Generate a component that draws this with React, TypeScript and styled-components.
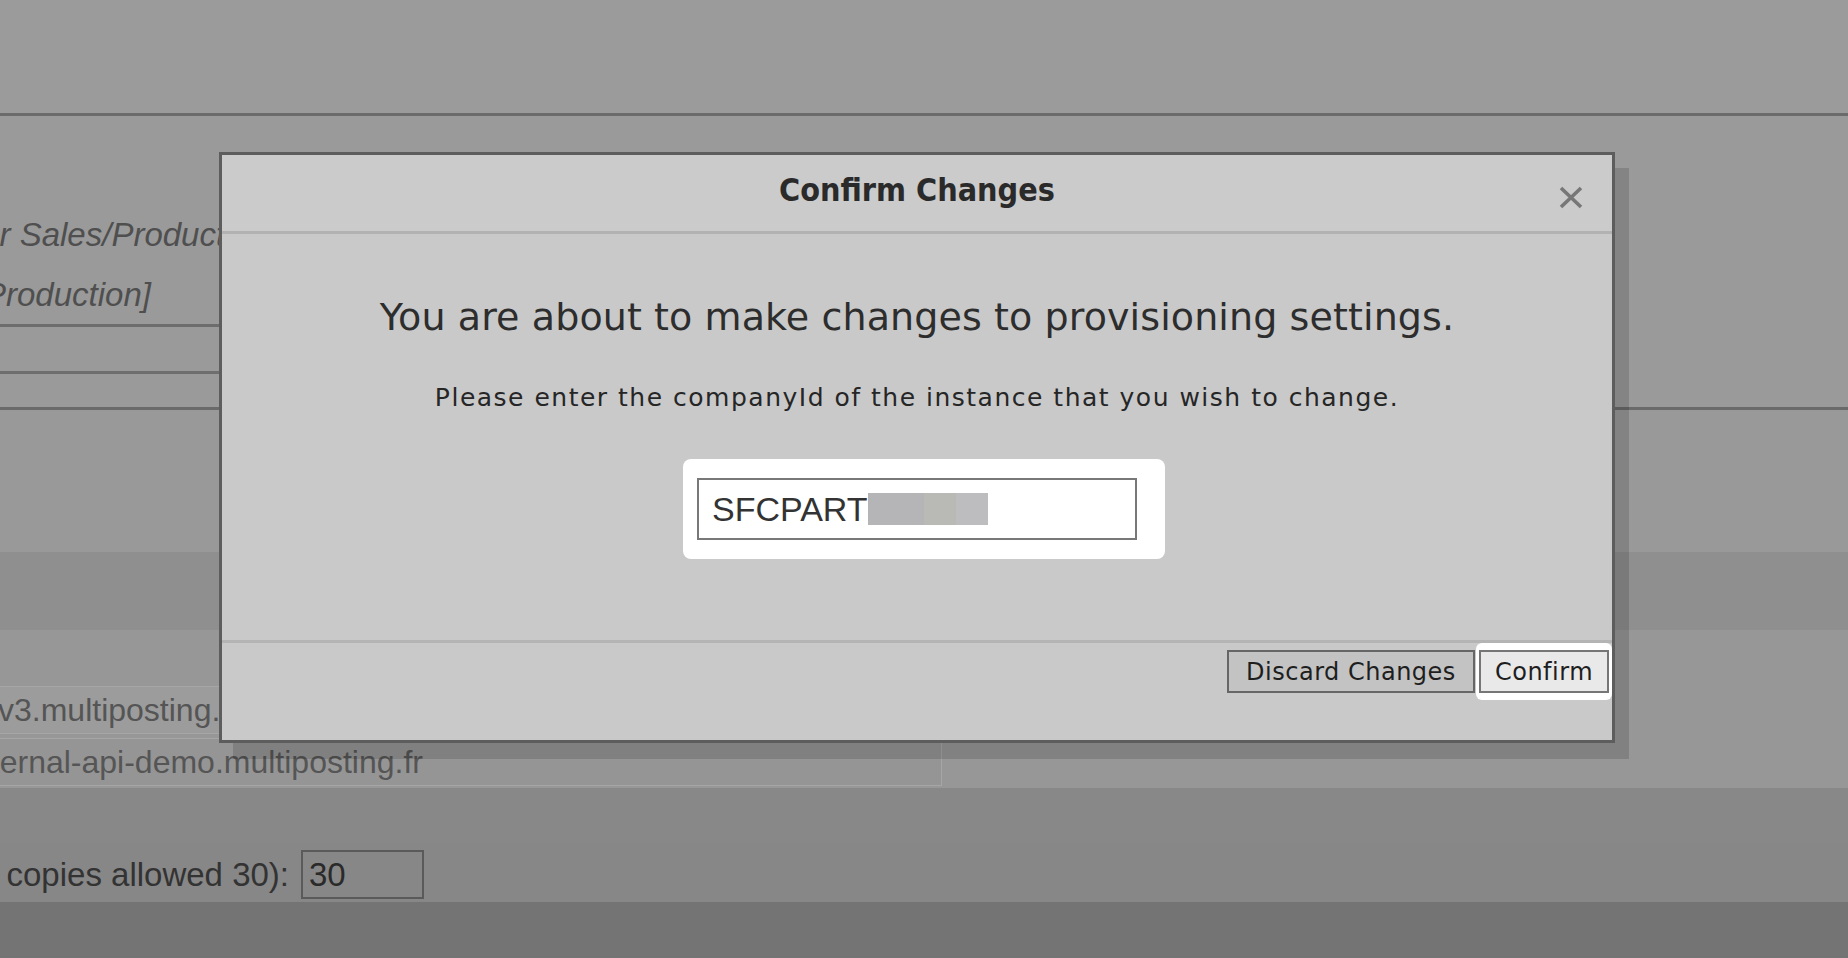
import React from "react";
import styled, { createGlobalStyle } from "styled-components";

const GlobalStyle = createGlobalStyle`
  html, body {
    margin: 0;
    padding: 0;
    height: 100%;
    overflow: hidden;
    background: #747474;
  }
  #root { height: 100%; }
`;

const Page = styled.div`
  position: relative;
  width: 1848px;
  height: 958px;
  overflow: hidden;
  display: flex;
  flex-direction: column;
  font-family: "Liberation Sans", Arial, sans-serif;
`;

/* ---------- page behind the dialog ---------- */

const TopBar = styled.div`
  flex: none;
  height: 113px;
  background: #9b9b9b;
  border-bottom: 3px solid #6b6b6b;
`;

const SettingsTable = styled.div`
  flex: none;
  height: 291px;
  background: #9a9a9a;
  border-bottom: 3px solid #6a6a6a;
`;

const NoteCell = styled.div`
  width: 1200px;
  height: 211px;
  box-sizing: border-box;
  padding-top: 89px;
  border-bottom: 3px solid #6d6d6d;
  overflow: hidden;
`;

const Note = styled.div<{ $shift: number }>`
  margin-left: ${({ $shift }) => -$shift}px;
  font-size: 33px;
  font-style: italic;
  line-height: 60px;
  color: #4f4f4f;
  white-space: nowrap;
`;

const EmptyCell = styled.div`
  width: 1200px;
  height: 44px;
  border-bottom: 3px solid #6e6e6e;
`;

const SectionGap = styled.div`
  flex: none;
  height: 142px;
  background: #999999;
`;

const SectionHeader = styled.div`
  flex: none;
  height: 78px;
  background: #8f8f8f;
`;

const FieldsArea = styled.div`
  flex: none;
  height: 158px;
  box-sizing: border-box;
  padding-top: 56px;
  background: #979797;
  display: flex;
  flex-direction: column;
  gap: 4px;
`;

const UrlField = styled.div<{ $tone: string }>`
  width: 942px;
  height: 48px;
  box-sizing: border-box;
  background: ${({ $tone }) => $tone};
  border: 1px solid #a6a6a6;
  border-left: none;
  display: flex;
  align-items: center;
  overflow: hidden;
  font-size: 32px;
  color: #555555;
  white-space: nowrap;
`;

const FieldText = styled.span<{ $shift: number }>`
  margin-left: ${({ $shift }) => -$shift}px;
`;

const LowerGap = styled.div`
  flex: none;
  height: 55px;
  background: #888888;
`;

const CopiesRow = styled.div`
  flex: none;
  height: 59px;
  padding-top: 4px;
  box-sizing: border-box;
  background: #878787;
  display: flex;
  align-items: center;
  gap: 12px;
  overflow: hidden;
  white-space: nowrap;
`;

const CopiesLabel = styled.span`
  margin-left: -76px;
  font-size: 33px;
  color: #333333;
`;

const CountInput = styled.div`
  width: 123px;
  height: 49px;
  box-sizing: border-box;
  border: 2px solid #5a5a5a;
  padding-left: 6px;
  display: flex;
  align-items: center;
  font-size: 33px;
  color: #2a2a2a;
`;

const BottomStrip = styled.div`
  flex: 1;
  background: #747474;
`;

/* ---------- dialog ---------- */

const Dialog = styled.div`
  position: absolute;
  left: 219px;
  top: 152px;
  width: 1396px;
  height: 591px;
  box-sizing: border-box;
  border: 3px solid #5d5d5d;
  background: #c9c9c9;
  box-shadow: 14px 16px 0 0 rgba(0, 0, 0, 0.14);
  display: flex;
  flex-direction: column;
  font-family: "DejaVu Sans", Verdana, sans-serif;
`;

const DialogHeader = styled.div`
  flex: none;
  height: 76px;
  background: #cbcbcb;
  border-bottom: 3px solid #b2b2b2;
  display: grid;
  grid-template-columns: 1fr auto 1fr;
  align-items: center;
`;

const DialogTitle = styled.h1`
  grid-column: 2;
  margin: -6px 0 0;
  font-family: "DejaVu Sans Condensed", "DejaVu Sans", Verdana, sans-serif;
  font-stretch: condensed;
  font-size: 32px;
  font-weight: bold;
  color: #2a2a2a;
`;

const CloseButton = styled.button`
  grid-column: 3;
  justify-self: end;
  margin: 8px 29px 0 0;
  padding: 0;
  border: none;
  background: none;
  width: 24px;
  height: 23px;
  display: flex;
`;

const DialogBody = styled.div`
  flex: 1;
  display: flex;
  flex-direction: column;
  align-items: center;
  padding-top: 59px;
`;

const Lead = styled.p`
  margin: 0;
  font-size: 38px;
  line-height: 48px;
  letter-spacing: 0.1px;
  color: #2d2d2d;
`;

const Hint = styled.p`
  margin: 42px 0 0;
  font-size: 25px;
  line-height: 30px;
  letter-spacing: 1.5px;
  color: #262626;
`;

const Highlight = styled.div`
  margin: 46px 0 0 14px;
  padding: 19px 28px 19px 14px;
  background: #ffffff;
  border-radius: 8px;
`;

const CompanyField = styled.div`
  width: 440px;
  height: 62px;
  box-sizing: border-box;
  border: 2px solid #787878;
  background: #ffffff;
  padding-left: 13px;
  display: flex;
  align-items: center;
  font-family: "Liberation Sans", Arial, sans-serif;
  font-size: 34px;
  color: #333333;
`;

const Redacted = styled.span<{ $w: number; $tone: string }>`
  display: inline-block;
  width: ${({ $w }) => $w}px;
  height: 32px;
  background: ${({ $tone }) => $tone};
`;

const DialogFooter = styled.div`
  flex: none;
  height: 97px;
  border-top: 3px solid #b4b4b4;
  display: flex;
  justify-content: flex-end;
  align-items: flex-start;
`;

const FooterActions = styled.div`
  display: flex;
  align-items: center;
  gap: 1px;
`;

const ActionButton = styled.button<{ $primary?: boolean; $width: number }>`
  width: ${({ $width }) => $width}px;
  height: 43px;
  box-sizing: border-box;
  padding: 0;
  border: 2px solid ${({ $primary }) => ($primary ? "#767676" : "#666666")};
  background: ${({ $primary }) => ($primary ? "#e9e9e9" : "#c3c3c3")};
  font-family: "DejaVu Sans", Verdana, sans-serif;
  font-size: 24px;
  letter-spacing: 0.5px;
  color: #1e1e1e;
`;

const ButtonSpot = styled.div`
  padding: 7px 3px;
  background: #ffffff;
  border-radius: 6px;
  display: flex;
`;

const CloseIcon = () => (
  <svg width="24" height="23" viewBox="0 0 24 23">
    <path d="M2 2 L22 21 M22 2 L2 21" stroke="#777777" strokeWidth="3.6" />
  </svg>
);

export default function App() {
  return (
    <>
      <GlobalStyle />
      <Page>
        <TopBar />
        <SettingsTable>
          <NoteCell>
            <Note $shift={28}>for Sales/Production environment</Note>
            <Note $shift={16}>Production]</Note>
          </NoteCell>
          <EmptyCell />
        </SettingsTable>
        <SectionGap />
        <SectionHeader />
        <FieldsArea>
          <UrlField $tone="#9c9c9c">
            <FieldText $shift={2}>v3.multiposting.fr</FieldText>
          </UrlField>
          <UrlField $tone="#959595">
            <FieldText $shift={43}>external-api-demo.multiposting.fr</FieldText>
          </UrlField>
        </FieldsArea>
        <LowerGap />
        <CopiesRow>
          <CopiesLabel>(max copies allowed 30):</CopiesLabel>
          <CountInput>30</CountInput>
        </CopiesRow>
        <BottomStrip />

        <Dialog>
          <DialogHeader>
            <DialogTitle>Confirm Changes</DialogTitle>
            <CloseButton aria-label="Close">
              <CloseIcon />
            </CloseButton>
          </DialogHeader>
          <DialogBody>
            <Lead>You are about to make changes to provisioning settings.</Lead>
            <Hint>Please enter the companyId of the instance that you wish to change.</Hint>
            <Highlight>
              <CompanyField>
                SFCPART
                <Redacted $w={56} $tone="#b5b4b6" />
                <Redacted $w={32} $tone="#b9b9b5" />
                <Redacted $w={32} $tone="#bdbdc0" />
              </CompanyField>
            </Highlight>
          </DialogBody>
          <DialogFooter>
            <FooterActions>
              <ActionButton $width={248}>Discard Changes</ActionButton>
              <ButtonSpot>
                <ActionButton $primary $width={130}>
                  Confirm
                </ActionButton>
              </ButtonSpot>
            </FooterActions>
          </DialogFooter>
        </Dialog>
      </Page>
    </>
  );
}
